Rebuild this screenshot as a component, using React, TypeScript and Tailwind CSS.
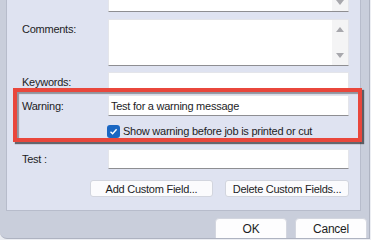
import React from "react";
import clsx from "clsx";

const Up = () => (
  <svg width="8" height="5" viewBox="0 0 8 5">
    <path d="M0 5 L4 0 L8 5 Z" fill="#a8a8ad" />
  </svg>
);

const Down = () => (
  <svg width="8" height="5" viewBox="0 0 8 5">
    <path d="M0 0 L8 0 L4 5 Z" fill="#a8a8ad" />
  </svg>
);

type BoxProps = {
  className?: string;
  scroll?: "down" | "both";
  children?: React.ReactNode;
};

const Box = ({ className, scroll, children }: BoxProps) => (
  <div
    className={clsx(
      "flex w-[241px] shrink-0 bg-white border border-[#e4e5ea] border-b-[#8e8e92]",
      className
    )}
  >
    <div className="flex flex-1 items-center pl-[2px]">{children}</div>
    {scroll === "both" && (
      <div className="flex w-[16px] flex-col items-center justify-between bg-[#f4f4f5] pt-[7px] pb-[7px]">
        <Up />
        <Down />
      </div>
    )}
    {scroll === "down" && (
      <div className="flex w-[16px] flex-col items-center justify-end bg-[#f4f4f5] pb-[6px]">
        <Down />
      </div>
    )}
  </div>
);

const Row = ({
  label,
  className,
  top,
  children,
}: {
  label?: string;
  className?: string;
  top?: boolean;
  children: React.ReactNode;
}) => (
  <div className={clsx("flex shrink-0", top ? "items-start" : "items-center", className)}>
    <div className={clsx("w-[86px] shrink-0", top && "pt-[3px]")}>{label}</div>
    {children}
  </div>
);

export default function App() {
  return (
    <div className="relative h-[240px] w-[371px] overflow-hidden bg-[#eceef3] font-['Liberation_Sans',Arial,sans-serif] text-[11px] leading-[14px] tracking-[-0.25px] text-[#1d1d1f]">
      {/* dialog window */}
      <div className="flex h-[239px] w-[370px] flex-col overflow-hidden rounded-bl-[7px] border-r border-b border-[#aeb3c1] bg-[#c9cedb]">
        {/* properties panel */}
        <div className="ml-[6px] mr-[8px] flex h-[211px] shrink-0 flex-col overflow-hidden border-x border-b border-[#b7bccb] bg-[#dfe3f1] pl-[15px]">
          <Row className="-mt-[8px]">
            <Box className="h-[20px]" scroll="down" />
          </Row>
          <Row label="Comments:" top className="mt-[7px]">
            <Box className="h-[47px]" scroll="both" />
          </Row>
          <Row label="Keywords:" className="mt-[6px]">
            <Box className="h-[20px]" />
          </Row>
          <Row label="Warning:" className="mt-[3px]">
            <Box className="h-[21px]">Test for a warning message</Box>
          </Row>
          <Row className="mt-[8px]">
            <div className="-ml-[1px] flex items-center gap-[3px]">
              <span className="flex h-[13px] w-[13px] items-center justify-center rounded-[3px] bg-[#1a66c2]">
                <svg width="9" height="9" viewBox="0 0 9 9">
                  <path d="M1.5 4.8 L3.6 6.8 L7.6 2.2" fill="none" stroke="#fff" strokeWidth="1.4" />
                </svg>
              </span>
              <span>Show warning before job is printed or cut</span>
            </div>
          </Row>
          <Row label="Test :" className="mt-[11px]">
            <Box className="h-[20px]" />
          </Row>
          <div className="mt-[11px] flex shrink-0 justify-end gap-[12px] pr-[11px]">
            <button className="h-[17px] w-[123px] rounded-[3px] border border-[#d2d5de] bg-[#fbfbfd] text-[11px] leading-[14px]">
              Add Custom Field...
            </button>
            <button className="h-[17px] w-[124px] rounded-[3px] border border-[#d2d5de] bg-[#fbfbfd] text-[11px] leading-[14px]">
              Delete Custom Fields...
            </button>
          </div>
        </div>

        {/* dialog buttons */}
        <div className="flex justify-end gap-[8px] pt-[7px] pr-[2px]">
          <button className="h-[24px] w-[72px] shrink-0 rounded-[4px] border border-[#d3d6df] bg-[#fdfdfe] pb-[2px] text-[12px]">
            OK
          </button>
          <button className="h-[24px] w-[72px] shrink-0 rounded-[4px] border border-[#d3d6df] bg-[#fdfdfe] pb-[2px] text-[12px]">
            Cancel
          </button>
        </div>
      </div>

      {/* annotation frame */}
      <div className="absolute left-[13px] top-[88px] h-[54px] w-[349px] border-[4px] border-[#e9473c] shadow-[2px_2px_1px_rgba(0,0,0,0.55),inset_2px_2px_1px_rgba(0,0,0,0.35)]" />
    </div>
  );
}
